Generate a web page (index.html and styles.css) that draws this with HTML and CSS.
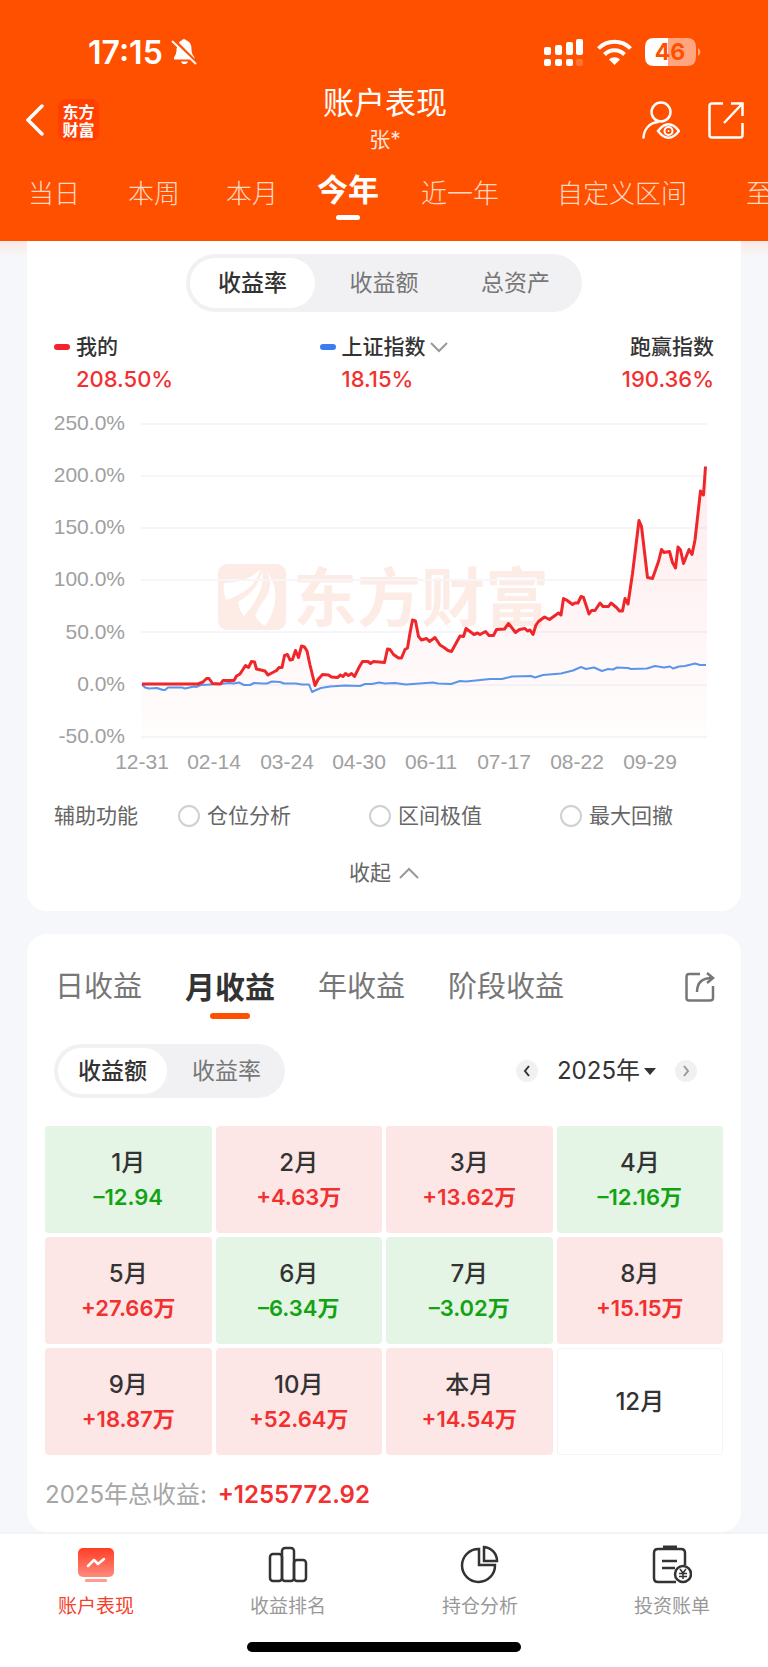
FILE: index.html
```html
<!DOCTYPE html>
<html lang="zh-CN">
<head>
  <meta charset="UTF-8">
  <meta name="viewport" content="width=device-width, initial-scale=1.0">
  <title>账户表现</title>
  <link rel="stylesheet" href="styles.css">
</head>
<body>
  <header class="header">
    <div class="status">
      <div class="status-time">
        <span>17:15</span>
        <svg width="26" height="28" viewBox="0 0 26 28">
          <path d="M7 6.5C8.300 4 9.600 2.800 11 2.300C11.200 1 14.800 1 15 2.300C18.500 3.500 20.500 6.500 20.500 11C20.500 15.500 22 17 23.500 19.500V21.500H3V19.500C4.500 17 5.500 15.500 5.500 11Z" fill="#fff"/>
          <path d="M10 23.500h7c-.5 3.400-6.500 3.400-7 0z" fill="#fff"/>
          <path d="M3 2L27 26" stroke="#ff5000" stroke-width="3"/>
          <path d="M1 3L25 26" stroke="#fff" stroke-width="2"/>
        </svg>
      </div>
      <div class="status-icons">
        <svg width="40" height="28" viewBox="0 0 40 28" fill="#fff">
          <rect x="0" y="9" width="7" height="8" rx="2"/>
          <rect x="11" y="7" width="7" height="10" rx="2"/>
          <rect x="22" y="4" width="7" height="13" rx="2"/>
          <rect x="32" y="1" width="7" height="16" rx="2"/>
          <rect x="0" y="21" width="7" height="7" rx="2"/>
          <rect x="11" y="21" width="7" height="7" rx="2"/>
          <rect x="22" y="21" width="7" height="7" rx="2"/>
          <rect x="32" y="21" width="7" height="7" rx="2" opacity=".2"/>
        </svg>
        <svg width="35" height="26" viewBox="0 0 35 26" fill="none" stroke="#fff" stroke-width="4">
          <path d="M1.500 9.500C10 .5 25 .5 33.500 9.500"/>
          <path d="M7.500 15.500C13 9.800 22 9.800 27.500 15.500"/>
          <path d="M12 20.500C15.500 17.500 19.500 17.500 23 20.500L17.500 26Z" fill="#fff" stroke="none"/>
        </svg>
        <svg width="56" height="28" viewBox="0 0 56 28">
          <path d="M9 0H23V28H9Q0 28 0 19V9Q0 0 9 0Z" fill="#fff"/>
          <path d="M23 0H42Q51 0 51 9V19Q51 28 42 28H23Z" fill="#ffa680"/>
          <path d="M53 10q5 4 0 8z" fill="#ffa680"/>
          <text class="battery-text" x="25" y="22" text-anchor="middle">46</text>
        </svg>
      </div>
    </div>

    <div class="title-bar">
      <div class="title-left">
        <button class="icon-btn" aria-label="返回">
          <svg width="18" height="32" viewBox="0 0 18 32" fill="none" stroke="#fff" stroke-width="3.500" stroke-linecap="round">
            <path d="M16 2L2 16L16 30"/>
          </svg>
        </button>
        <span class="app-logo">东方<br>财富</span>
      </div>
      <div class="title-center">
        <h1>账户表现</h1>
        <span>张*</span>
      </div>
      <div class="title-right">
        <button class="icon-btn" aria-label="账户">
          <svg width="38" height="38" viewBox="0 0 38 38" fill="none" stroke="#fff" stroke-width="2.500">
            <circle cx="19" cy="11" r="9.500"/>
            <path d="M1.500 36.500C2 28 8 21.500 16 21" stroke-linecap="round"/>
            <path d="M16 30Q26.500 16.500 37 30Q26.500 43.500 16 30Z"/>
            <circle cx="26.500" cy="30" r="4" stroke-width="2"/>
            <circle cx="26.500" cy="30" r="1" fill="#fff" stroke="none"/>
          </svg>
        </button>
        <button class="icon-btn" aria-label="分享">
          <svg width="36" height="37" viewBox="0 0 36 37" fill="none" stroke="#fff" stroke-width="2.500">
            <path d="M15 1.500H4Q1.500 1.500 1.500 4V33Q1.500 35.500 4 35.500H32Q34.500 35.500 34.500 33V21"/>
            <path d="M23 1.500H34.500V14M34 2L16 21"/>
          </svg>
        </button>
      </div>
    </div>

    <nav class="period-tabs">
      <button>当日</button>
      <button>本周</button>
      <button>本月</button>
      <button class="active">今年</button>
      <button>近一年</button>
      <button>自定义区间</button>
      <button>至今</button>
    </nav>
  </header>

  <main class="content">
    <section class="card card-chart">
      <div class="segment segment-3">
        <button class="active">收益率</button>
        <button>收益额</button>
        <button>总资产</button>
      </div>

      <div class="legend">
        <div class="legend-item">
          <i class="dash dash-red"></i>
          <span>我的</span>
          <b>208.50%</b>
        </div>
        <div class="legend-item">
          <i class="dash dash-blue"></i>
          <button class="index-btn">上证指数
            <svg width="18" height="11" viewBox="0 0 18 11" fill="none" stroke="#999" stroke-width="2"><path d="M1 1L9 9L17 1"/></svg>
          </button>
          <b>18.15%</b>
        </div>
        <div class="legend-item legend-right">
          <span>跑赢指数</span>
          <b>190.36%</b>
        </div>
      </div>

      <svg class="chart" viewBox="54 405 660 372">
        <defs>
          <linearGradient id="area" x1="0" y1="466" x2="0" y2="737" gradientUnits="userSpaceOnUse">
            <stop offset="0" stop-color="#f5222d" stop-opacity=".09"/>
            <stop offset="1" stop-color="#f5222d" stop-opacity=".01"/>
          </linearGradient>
        </defs>

        <!-- watermark -->
        <g fill="#fdece6">
          <rect x="218" y="564" width="68" height="66" rx="9"/>
          <text class="watermark" x="293" y="621">东方财富</text>
        </g>
        <g fill="#fff">
          <path d="M224 583C237 583 252 579 260 569C257 586 241 595 226 600Q223 592 224 583Z"/>
          <path d="M262 570C261 583 252 594 238 602C239 608 241 612 244 616C255 603 265 589 262 570Z"/>
          <path d="M265 569C272 578 272 590 264 600Q258 608 255 616Q259 623 265 626C274 614 283 590 265 569Z"/>
        </g>

        <g stroke="#f6f6fa" stroke-width="2">
          <path d="M141 424H707M141 476H707M141 528H707M141 580H707M141 632H707M141 685H707M141 737H707"/>
        </g>

        <path fill="url(#area)" d="M142 684L198 684L207 679L213 684L223 680L234 680L245 666L254 662L257 669L268 675L282 667L287 655L292 660L301 646L307 651L315 685L322 675L354 676L362 662L384 662L388 649L398 658L407 648L412 620L421 640L435 638L451 651L466 628L480 634L508 624L533 634L544 617L561 615L564 599L581 597L589 614L600 603L622 611L628 604L639 521L647 577L652 578L661 550L669 552L675 568L678 547L683 563L692 554L700 491L703 495L707 466V737H142Z"/>

        <polyline class="line line-blue" points="142,684.5 145,687.5 149,688.5 157,688 163,690 165,690 168,687.5 182,687.5 185,688.5 194,686.5 196,687 201,685 220,684 229,683 234,683.5 239,682.5 244,685 250,685 254,683 262,683.5 267,683.5 272,681.5 280,682 284,683.5 296,683.5 302,684.5 309,684.5 312,692 316,690 321,688 330,686.5 345,685.5 360,686 365,684 372,684 379,682.5 385,683.5 395,683 402,684 406,684.5 433,682.5 438,683.5 451,684 460,681 466,681.5 490,679 502,679 512,676.5 531,676 535,677.5 543,675 561,673.5 573,670.5 581,667 586,669 594,667.5 602,671 608,669 613,669.5 617,667.5 628,668 631,669 647,668.5 655,666 664,667.5 670,666.5 673,668.5 679,666.5 685,666 695,663.5 700,665 706,665"/>

        <polyline class="line line-red" points="142,684 198,684 203,682 206.5,678.5 209,678.5 212.5,683.5 220.5,684 223,680.5 234,680.5 236.5,676 240,674 245.5,665.5 248.5,667.5 251.5,661.5 254.5,662 256.5,669 265,671 268,675 276.5,670.5 279,667.5 282,667.5 284.5,655.5 287.5,654.5 290,660 292.5,659.5 295.5,650.5 298.5,657.5 301.5,646 304.5,647 307,651 310,665 315,685.5 318,679.5 322.5,674.5 328.5,675 331.5,677 337.5,677.5 340.5,675 343,676.5 345.5,673.5 348.5,675.5 351.5,673.5 354.5,676.5 359.5,666.5 362.5,661.5 368,661.5 370.5,663.5 373.5,661.5 384.5,662.5 387.5,649 390,649.5 393.5,654.5 398.5,658 401.5,658 405,649.5 407.5,648 410,633 412.5,620 415.5,621 418.5,636.5 421.5,640 426.5,638.5 429.5,641.5 435,637.5 440,645 444,647.5 448,650.5 451.5,651.5 460,636 463.5,636.5 466,628.5 474,634.5 477.5,633 480,634.5 485.5,631.5 489,635.5 493.5,635.5 496.5,629.5 504.5,629 508.5,623.5 515.5,632.5 519.5,629.5 525,628.5 527.5,631 530,630 533,634.5 536,625 538.5,621.5 544.5,617 549.5,619.5 558.5,613 561,615 563.5,598.5 566.5,600 572.5,604.5 575,603 578,603 581,596.5 583.5,597.5 589,614 591.5,610.5 595,610.5 600,603 603,606.5 608.5,606.5 611,603 616.5,607.5 619.5,611 622.5,611 625,598.5 628,604 632.5,573.5 639,520.5 641.5,526.5 647.5,577.5 652.5,578.5 658.5,561.5 661.5,549.5 664,552.5 669.5,551.5 672.5,562.5 675.5,568 678,547 680.5,550 683.5,563.5 689,549.5 692,554.5 695,540 700.5,491 703.5,495 705.5,466.5"/>

        <g class="axis" text-anchor="end">
          <text x="125" y="430">250.0%</text>
          <text x="125" y="482">200.0%</text>
          <text x="125" y="534">150.0%</text>
          <text x="125" y="586">100.0%</text>
          <text x="125" y="639">50.0%</text>
          <text x="125" y="691">0.0%</text>
          <text x="125" y="743">-50.0%</text>
        </g>
        <g class="axis" text-anchor="middle">
          <text x="142" y="769">12-31</text>
          <text x="214" y="769">02-14</text>
          <text x="287" y="769">03-24</text>
          <text x="359" y="769">04-30</text>
          <text x="431" y="769">06-11</text>
          <text x="504" y="769">07-17</text>
          <text x="577" y="769">08-22</text>
          <text x="650" y="769">09-29</text>
        </g>
      </svg>

      <div class="helpers">
        <span>辅助功能</span>
        <div class="helpers-list">
          <label><input type="checkbox">仓位分析</label>
          <label><input type="checkbox">区间极值</label>
          <label><input type="checkbox">最大回撤</label>
        </div>
      </div>

      <button class="collapse">收起
        <svg width="20" height="12" viewBox="0 0 20 12" fill="none" stroke="#999" stroke-width="2"><path d="M1 11L10 2L19 11"/></svg>
      </button>
    </section>

    <section class="card card-profit">
      <div class="profit-head">
        <div class="profit-tabs">
          <button>日收益</button>
          <button class="active">月收益</button>
          <button>年收益</button>
          <button>阶段收益</button>
        </div>
        <button class="icon-btn" aria-label="导出">
          <svg width="30" height="30" viewBox="0 0 30 30" fill="none" stroke="#777" stroke-width="2.500">
            <path d="M15 2H4Q1.500 2 1.500 5V26Q1.500 28.500 4 28.500H25Q28 28.500 28 26V14"/>
            <path d="M12 20C12 11 17 6 27 6M22 1L28 6L22 11"/>
          </svg>
        </button>
      </div>

      <div class="profit-filter">
        <div class="segment segment-2">
          <button class="active">收益额</button>
          <button>收益率</button>
        </div>
        <div class="year">
          <button class="year-arrow" aria-label="上一年">
            <svg width="8" height="12" viewBox="0 0 8 12" fill="none" stroke="#333" stroke-width="2"><path d="M6 1L2 6L6 11"/></svg>
          </button>
          <button class="year-value">2025年
            <svg width="12" height="7" viewBox="0 0 12 7" fill="#333"><path d="M0 0H12L6 7Z"/></svg>
          </button>
          <button class="year-arrow" aria-label="下一年">
            <svg width="8" height="12" viewBox="0 0 8 12" fill="none" stroke="#999" stroke-width="2"><path d="M2 1L6 6L2 11"/></svg>
          </button>
        </div>
      </div>

      <div class="months">
        <div class="month down"><span>1月</span><b>–12.94</b></div>
        <div class="month up"><span>2月</span><b>+4.63万</b></div>
        <div class="month up"><span>3月</span><b>+13.62万</b></div>
        <div class="month down"><span>4月</span><b>–12.16万</b></div>
        <div class="month up"><span>5月</span><b>+27.66万</b></div>
        <div class="month down"><span>6月</span><b>–6.34万</b></div>
        <div class="month down"><span>7月</span><b>–3.02万</b></div>
        <div class="month up"><span>8月</span><b>+15.15万</b></div>
        <div class="month up"><span>9月</span><b>+18.87万</b></div>
        <div class="month up"><span>10月</span><b>+52.64万</b></div>
        <div class="month up"><span>本月</span><b>+14.54万</b></div>
        <div class="month empty"><span>12月</span></div>
      </div>

      <p class="total">2025年总收益: <b>+1255772.92</b></p>
    </section>
  </main>

  <footer class="footer">
    <nav class="bottom-nav">
      <a href="#" class="active">
        <svg width="40" height="40" viewBox="0 0 40 40">
          <defs>
            <linearGradient id="screen" x1="0" y1="0" x2="0" y2="1">
              <stop offset="0" stop-color="#ff3d26"/>
              <stop offset="1" stop-color="#ff8b7c"/>
            </linearGradient>
          </defs>
          <rect x="2" y="3" width="36" height="29" rx="5" fill="url(#screen)"/>
          <rect x="9" y="34" width="22" height="3" rx="1" fill="#ff9c8f"/>
          <path d="M12 21L18 15L22 19L28 14" fill="none" stroke="#fff" stroke-width="2.500" stroke-linecap="round" stroke-linejoin="round"/>
        </svg>
        <span>账户表现</span>
      </a>
      <a href="#">
        <svg width="40" height="40" viewBox="0 0 40 40" fill="none" stroke="#333" stroke-width="2.500">
          <rect x="2" y="9" width="12" height="27" rx="3"/>
          <rect x="14" y="3" width="12" height="33" rx="3"/>
          <rect x="26" y="15" width="12" height="21" rx="3"/>
        </svg>
        <span>收益排名</span>
      </a>
      <a href="#">
        <svg width="40" height="40" viewBox="0 0 40 40" fill="none" stroke="#333" stroke-width="2.500">
          <path d="M19 4A16.500 16.500 0 1 0 35 20H19Z"/>
          <path d="M24 2V16H37A14 14 0 0 0 24 2Z"/>
        </svg>
        <span>持仓分析</span>
      </a>
      <a href="#">
        <svg width="40" height="40" viewBox="0 0 40 40" fill="none" stroke="#333" stroke-width="2.500">
          <path d="M24 37H6Q2 37 2 33V8Q2 4 6 4H29Q33 4 33 8V20"/>
          <path d="M11 2.500H25" stroke-width="4"/>
          <path d="M10 16H25M10 23H23"/>
          <circle cx="31" cy="29" r="8"/>
          <path d="M28 24L31 28L34 24M31 28V34M27 28.500H35M27 31.500H35" stroke-width="1.500"/>
        </svg>
        <span>投资账单</span>
      </a>
    </nav>
    <div class="home-bar"></div>
  </footer>
</body>
</html>
```
FILE: styles.css
```css
* {
  box-sizing: border-box;
}

body {
  margin: 0;
  min-height: 100vh;
  display: flex;
  flex-direction: column;
  background-color: #f6f7fa;
  color: #333;
  font-family: Inter, "Noto Sans CJK SC", sans-serif;
  overflow-x: hidden;
}

button {
  padding: 0;
  border: none;
  background: none;
  color: inherit;
  font: inherit;
  cursor: pointer;
  white-space: nowrap;
}

svg {
  display: block;
  flex-shrink: 0;
}

/* header */
.header {
  background-color: #ff5000;
  color: #fff;
  padding-bottom: 21px;
  overflow: hidden;
}

.status {
  display: flex;
  justify-content: space-between;
  align-items: center;
  height: 83px;
  padding: 21px 67px 0 88px;
}

.status-time {
  display: flex;
  align-items: center;
  gap: 8px;
  font-size: 32px;
  font-weight: 600;
}

.status-icons {
  display: flex;
  align-items: center;
  gap: 13px;
}

.battery-text {
  font-size: 23px;
  font-weight: 700;
  fill: #ff5000;
}

.title-bar {
  display: grid;
  grid-template-columns: 1fr auto 1fr;
  align-items: center;
  padding: 0 24px 0 26px;
}

.title-left {
  display: flex;
  align-items: center;
  gap: 14px;
}

.app-logo {
  width: 41px;
  padding: 3px 0;
  border-radius: 8px;
  background-color: #ff4000;
  font-family: "Noto Sans CJK SC", sans-serif;
  font-size: 16px;
  font-weight: 700;
  line-height: 18px;
  text-align: center;
}

.title-center {
  text-align: center;
}

.title-center h1 {
  margin: 0;
  font-size: 31px;
  font-weight: 400;
  line-height: 40px;
}

.title-center span {
  display: block;
  font-size: 21px;
  line-height: 34px;
  opacity: 0.85;
}

.title-right {
  display: flex;
  justify-content: flex-end;
  align-items: center;
  gap: 28px;
}

.period-tabs {
  display: grid;
  grid-template-columns: 100px 100px 96px 96px 128px 196px 104px;
  align-items: start;
  padding: 16px 0 0 4px;
}

.period-tabs button {
  font-size: 26px;
  font-weight: 300;
  line-height: 42px;
  color: #ffd9c7;
}

.period-tabs .active {
  font-size: 31px;
  font-weight: 700;
  line-height: 34px;
  color: #fff;
}

.period-tabs .active::after {
  content: "";
  display: block;
  width: 24px;
  height: 5px;
  margin: 8px auto 0;
  border-radius: 3px;
  background-color: #fff;
}

/* cards */
.content {
  flex: 1;
  padding: 0 27px;
  background: linear-gradient(#fbe9e5, #f6f7fa 16px);
}

.card {
  background-color: #fff;
  border-radius: 20px;
}

.card-chart {
  padding: 13px 27px 21px;
  border-radius: 0 0 20px 20px;
  margin-bottom: 23px;
}

.segment {
  display: flex;
  justify-content: space-between;
  padding: 4px;
  border-radius: 29px;
  background-color: #f1f1f4;
  color: #777;
  font-size: 23px;
}

.segment button {
  border-radius: 25px;
}

.segment .active {
  background-color: #fff;
  color: #333;
  font-weight: 500;
}

.segment-3 {
  width: 396px;
  margin: 0 auto;
}

.segment-3 button {
  width: 125px;
  line-height: 50px;
}

.segment-2 {
  width: 231px;
}

.segment-2 button {
  width: 109px;
  line-height: 46px;
}

.legend {
  display: grid;
  grid-template-columns: 2fr 2fr 1fr;
  column-gap: 8px;
  margin-top: 19px;
  font-size: 21px;
  font-weight: 500;
  line-height: 32px;
}

.legend-item {
  display: grid;
  grid-template-columns: 16px auto;
  column-gap: 6px;
  align-items: center;
  justify-content: start;
}

.legend-item b {
  grid-column: 2;
  color: #f23030;
  font-size: 22px;
  font-weight: 500;
}

.legend-right {
  grid-template-columns: auto;
  justify-content: end;
  text-align: right;
}

.legend-right b {
  grid-column: 1;
}

.dash {
  height: 6px;
  border-radius: 3px;
}

.dash-red {
  background-color: #f5222d;
}

.dash-blue {
  background-color: #3a7ff0;
}

.index-btn {
  display: flex;
  align-items: center;
  gap: 4px;
}

.chart {
  width: 100%;
  margin-top: 10px;
}

.watermark {
  font-family: "Noto Sans CJK SC", sans-serif;
  font-size: 64px;
  font-weight: 700;
}

.axis {
  fill: #a0a0a0;
  font-family: "Liberation Sans", Arial, sans-serif;
  font-size: 21px;
}

.line {
  fill: none;
  stroke-linejoin: round;
}

.line-red {
  stroke: #f0262b;
  stroke-width: 3;
}

.line-blue {
  stroke: #5b95ea;
  stroke-width: 2;
}

.helpers {
  display: flex;
  align-items: center;
  gap: 40px;
  margin-top: 23px;
  color: #666;
  font-size: 21px;
  line-height: 32px;
  white-space: nowrap;
}

.helpers-list {
  display: flex;
  gap: 78px;
}

.helpers label {
  display: flex;
  align-items: center;
  gap: 7px;
}

.helpers input {
  appearance: none;
  width: 22px;
  height: 22px;
  margin: 0;
  border: 2px solid #d0d0d0;
  border-radius: 50%;
}

.helpers input:checked {
  border: 6px solid #ff5000;
}

.collapse {
  display: flex;
  align-items: center;
  gap: 8px;
  margin: 24px auto 0;
  color: #666;
  font-size: 21px;
  line-height: 34px;
}

/* profit calendar */
.card-profit {
  padding: 32px 18px 19px;
}

.profit-head {
  display: flex;
  justify-content: space-between;
  align-items: flex-start;
  padding: 0 8px 0 10px;
}

.profit-head .icon-btn {
  margin-top: 6px;
}

.profit-tabs {
  display: flex;
  align-items: flex-start;
  gap: 43px;
  color: #777;
  font-size: 29px;
  line-height: 42px;
}

.profit-tabs .active {
  color: #333;
  font-size: 30px;
  font-weight: 700;
}

.profit-tabs .active::after {
  content: "";
  display: block;
  width: 40px;
  height: 6px;
  margin: 5px auto 0;
  border-radius: 3px;
  background-color: #ff5000;
}

.profit-filter {
  display: flex;
  justify-content: space-between;
  align-items: center;
  margin-top: 25px;
  padding: 0 26px 0 9px;
}

.year {
  display: flex;
  align-items: center;
  gap: 19px;
}

.year-arrow {
  display: flex;
  justify-content: center;
  align-items: center;
  width: 22px;
  height: 22px;
  border-radius: 50%;
  background-color: #f1f1f4;
}

.year-value {
  display: flex;
  align-items: center;
  gap: 4px;
  font-size: 24px;
  line-height: 36px;
}

.months {
  display: grid;
  grid-template-columns: repeat(4, 1fr);
  gap: 4px;
  margin-top: 28px;
}

.month {
  display: flex;
  flex-direction: column;
  justify-content: center;
  height: 107px;
  border-radius: 4px;
  font-size: 24px;
  font-weight: 500;
  line-height: 35px;
  text-align: center;
}

.month b {
  font-size: 22px;
  font-weight: 600;
}

.up {
  background-color: #fde7e6;
}

.up b,
.total b {
  color: #f23030;
}

.down {
  background-color: #e4f4e5;
}

.down b {
  color: #12a312;
}

.empty {
  border: 1px solid #f4f4f6;
}

.total {
  margin: 22px 0 0;
  color: #a6a6a6;
  font-size: 24px;
  line-height: 36px;
}

.total b {
  margin-left: 4px;
  font-weight: 600;
}

/* bottom */
.footer {
  background-color: #fff;
  border-top: 2px solid #f3f3f6;
  padding-bottom: 15px;
}

.bottom-nav {
  display: grid;
  grid-template-columns: repeat(4, 1fr);
  padding-top: 11px;
}

.bottom-nav a {
  display: flex;
  flex-direction: column;
  align-items: center;
  gap: 6px;
  color: #999;
  font-size: 19px;
  line-height: 32px;
  text-decoration: none;
}

.bottom-nav .active {
  color: #f5402c;
}

.home-bar {
  width: 274px;
  height: 10px;
  margin: 19px auto 0;
  border-radius: 5px;
  background-color: #000;
}
```
